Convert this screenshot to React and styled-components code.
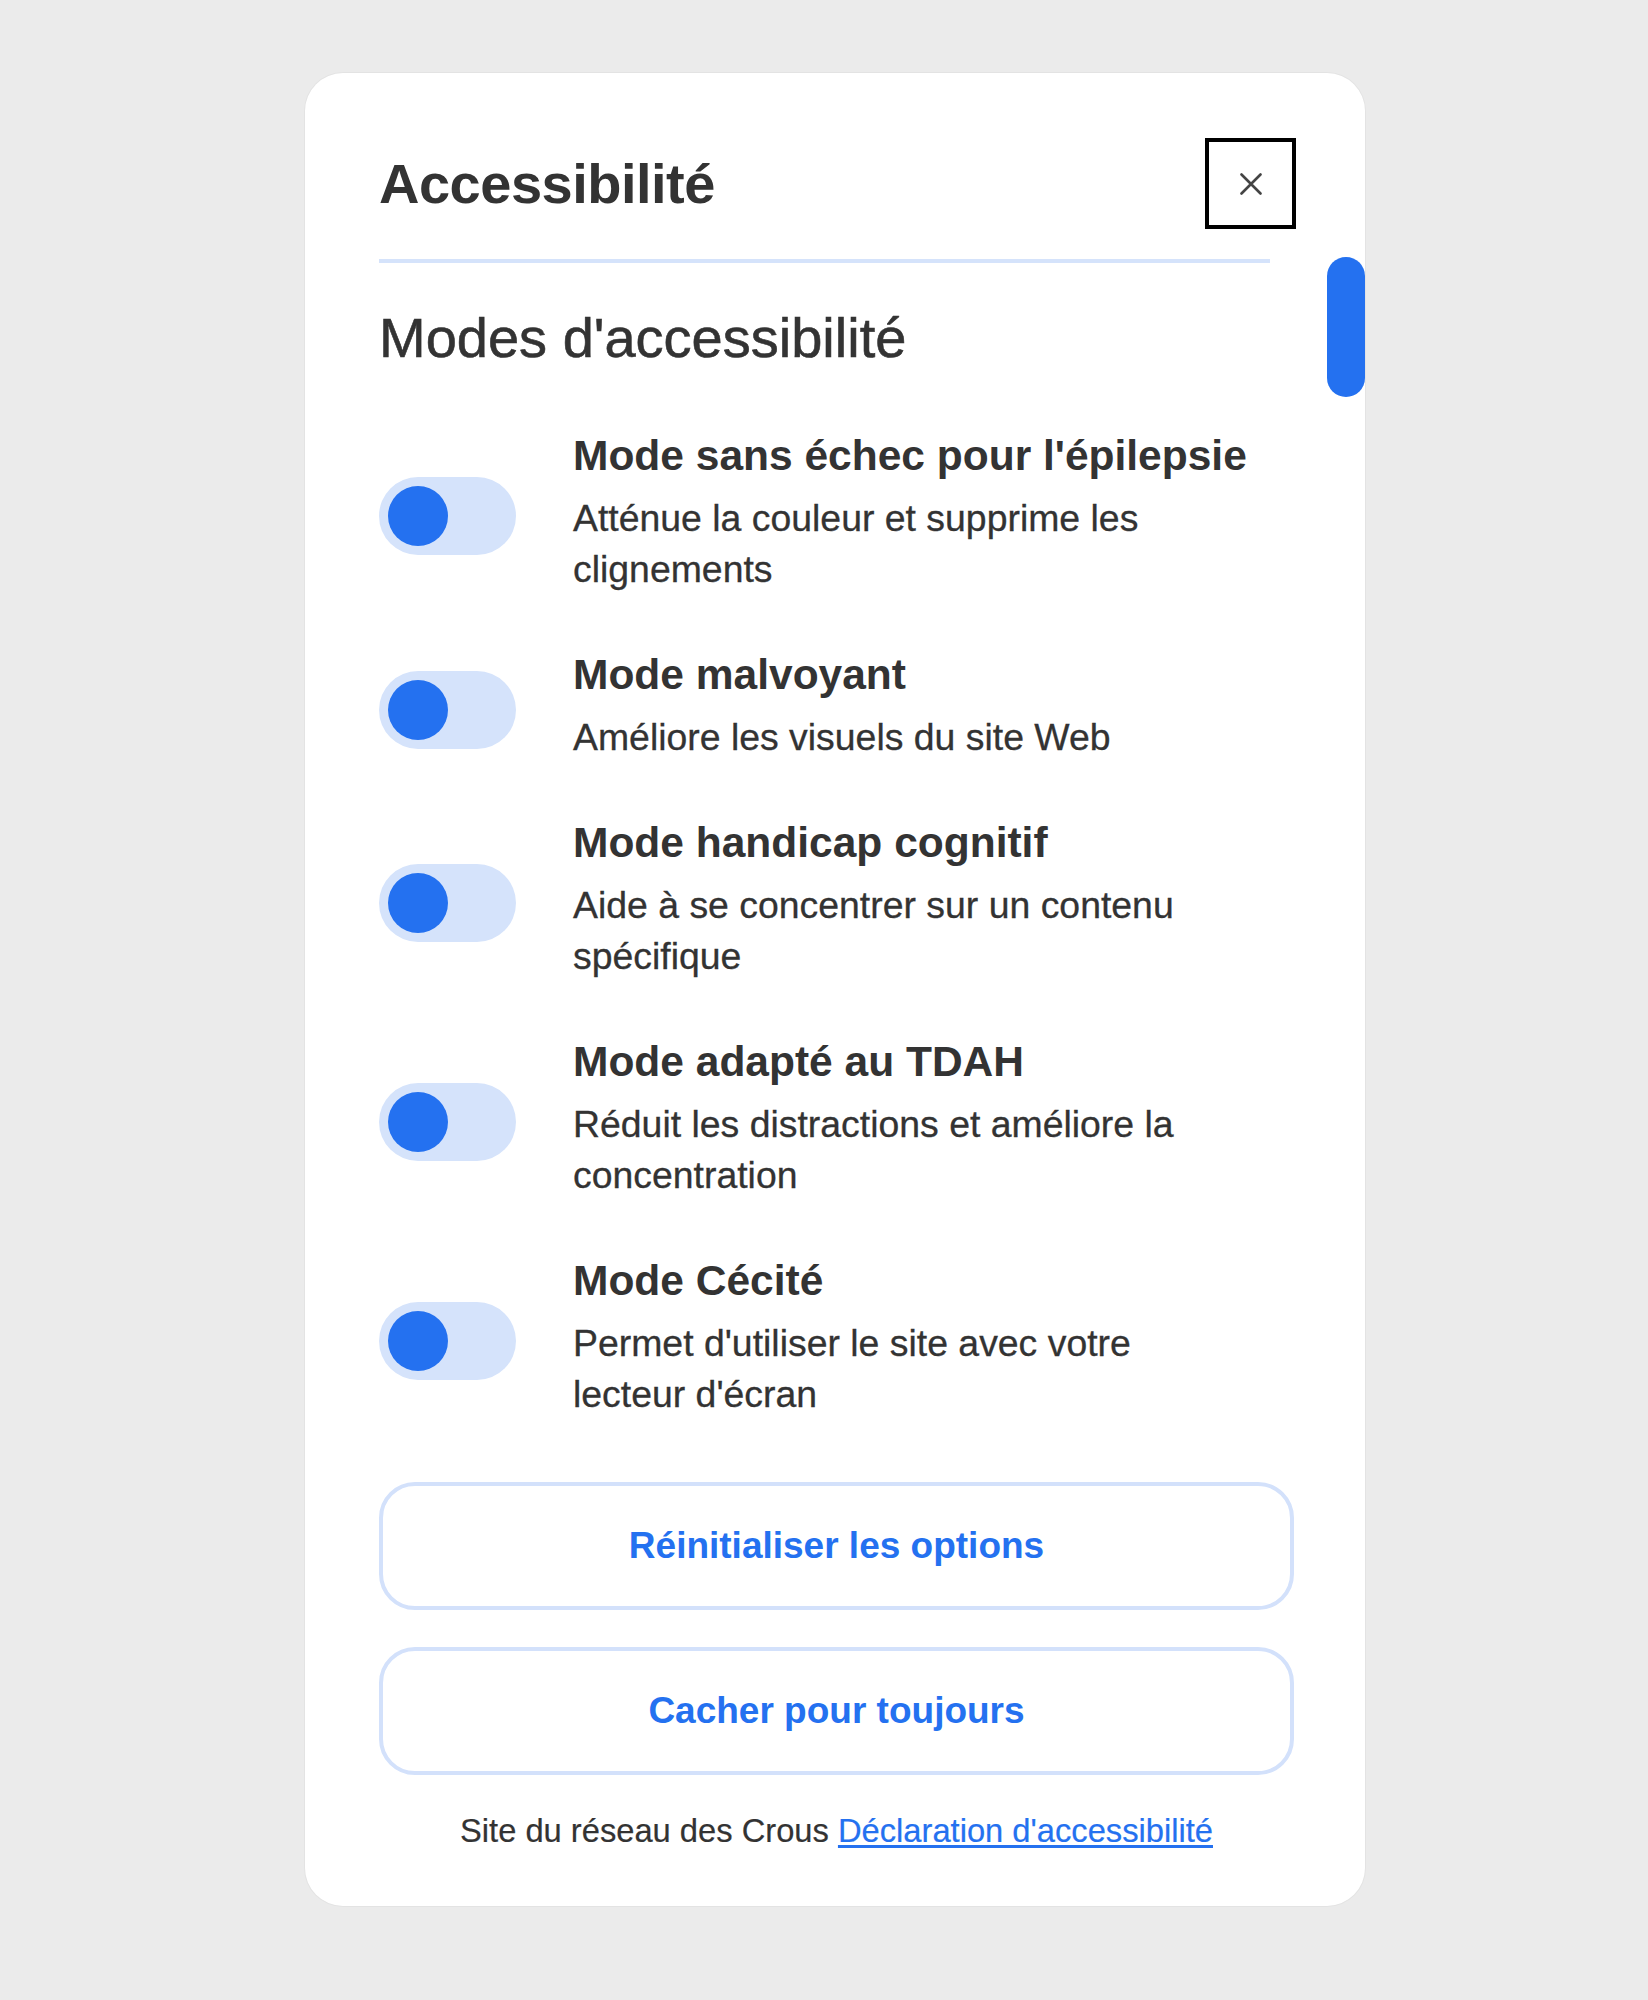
import React, { useState } from 'react'
import styled, { createGlobalStyle } from 'styled-components'

const GlobalStyle = createGlobalStyle`
  html, body {
    margin: 0;
    padding: 0;
    background: #ebebeb;
  }
  body {
    font-family: "Liberation Sans", Arial, sans-serif;
    color: #333;
  }
`

const Page = styled.div`
  min-height: 2000px;
  padding: 73px 0 0 305px;
  box-sizing: border-box;
`

const Card = styled.section`
  position: relative;
  width: 1060px;
  box-sizing: border-box;
  padding: 65px 71px 52px 74px;
  background: #fff;
  border-radius: 38px;
  box-shadow: 0 0 0 1px rgba(0, 0, 0, 0.03);
`

const ScrollThumb = styled.div`
  position: absolute;
  top: 184px;
  right: 0;
  width: 38px;
  height: 140px;
  border-radius: 19px;
  background: #2471f0;
`

const Header = styled.header`
  display: flex;
  align-items: center;
  justify-content: space-between;
`

const Title = styled.h1`
  margin: 0;
  font-size: 56px;
  line-height: 1.2;
  font-weight: 700;
  letter-spacing: -0.5px;
  color: #333;
`

const CloseButton = styled.button`
  width: 91px;
  height: 91px;
  margin-right: -2px;
  display: flex;
  align-items: center;
  justify-content: center;
  padding: 0;
  background: #fff;
  border: 4px solid #000;
  border-radius: 0;
  cursor: pointer;
`

const Divider = styled.hr`
  width: 891px;
  height: 4px;
  margin: 30px 0 0;
  border: none;
  background: #d5e3fb;
`

const SectionTitle = styled.h2`
  margin: 42px 0 0;
  font-size: 56px;
  line-height: 66px;
  font-weight: 400;
  -webkit-text-stroke: 0.6px #333;
  color: #333;
`

const ModeList = styled.ul`
  list-style: none;
  margin: 60px 0 0;
  padding: 0;
  display: flex;
  flex-direction: column;
  gap: 55px;
`

const ModeRow = styled.li`
  display: flex;
  align-items: center;
  gap: 57px;
`

const Toggle = styled.button`
  flex: 0 0 137px;
  height: 78px;
  margin-top: 6px;
  padding: 9px;
  border: none;
  border-radius: 39px;
  background: #d5e3fb;
  display: flex;
  justify-content: ${p => (p.$on ? 'flex-end' : 'flex-start')};
  cursor: pointer;
`

const Knob = styled.span`
  width: 60px;
  height: 60px;
  border-radius: 50%;
  background: #2471f0;
`

const ModeText = styled.div`
  width: 670px;
`

const ModeName = styled.h3`
  margin: 0;
  font-size: 42.5px;
  line-height: 50px;
  font-weight: 700;
  white-space: nowrap;
  color: #333;
`

const ModeDesc = styled.p`
  margin: 12px 0 0;
  font-size: 37.4px;
  line-height: 51px;
  -webkit-text-stroke: 0.3px #333;
  color: #333;
`

const Actions = styled.div`
  margin-top: 62px;
  display: flex;
  flex-direction: column;
  gap: 37px;
`

const ActionButton = styled.button`
  height: 128px;
  width: 100%;
  background: #fff;
  border: 4px solid #d3e1fb;
  border-radius: 36px;
  font-family: "Liberation Sans", Arial, sans-serif;
  font-size: 37px;
  font-weight: 700;
  color: #2471f0;
  cursor: pointer;
`

const Footer = styled.p`
  margin: 33px 0 0;
  text-align: center;
  font-size: 32.7px;
  line-height: 46px;
  -webkit-text-stroke: 0.2px #333;
  color: #333;
`

const FooterLink = styled.a`
  color: #2471f0;
  -webkit-text-stroke: 0.2px #2471f0;
  text-decoration: underline;
  text-underline-offset: 3px;
`

const modes = [
  {
    id: 'epilepsy',
    name: "Mode sans échec pour l'épilepsie",
    desc: 'Atténue la couleur et supprime les clignements'
  },
  {
    id: 'vision',
    name: 'Mode malvoyant',
    desc: 'Améliore les visuels du site Web'
  },
  {
    id: 'cognitive',
    name: 'Mode handicap cognitif',
    desc: 'Aide à se concentrer sur un contenu spécifique'
  },
  {
    id: 'adhd',
    name: 'Mode adapté au TDAH',
    desc: 'Réduit les distractions et améliore la concentration'
  },
  {
    id: 'blind',
    name: 'Mode Cécité',
    desc: "Permet d'utiliser le site avec votre lecteur d'écran"
  }
]

function CloseIcon() {
  return (
    <svg width="22" height="22" viewBox="0 0 22 22" aria-hidden="true">
      <path d="M1.5 1.5 L20.5 20.5 M20.5 1.5 L1.5 20.5" stroke="#444" strokeWidth="2.6" strokeLinecap="round" />
    </svg>
  )
}

export default function App() {
  const [active, setActive] = useState({})

  const toggleMode = (id) => {
    setActive(prev => ({ ...prev, [id]: !prev[id] }))
  }

  return (
    <Page>
      <GlobalStyle />
      <Card>
        <ScrollThumb />
        <Header>
          <Title>Accessibilité</Title>
          <CloseButton aria-label="Fermer">
            <CloseIcon />
          </CloseButton>
        </Header>
        <Divider />

        <SectionTitle>Modes d'accessibilité</SectionTitle>

        <ModeList>
          {modes.map(mode => (
            <ModeRow key={mode.id}>
              <Toggle
                role="switch"
                aria-checked={!!active[mode.id]}
                $on={!!active[mode.id]}
                onClick={() => toggleMode(mode.id)}
              >
                <Knob />
              </Toggle>
              <ModeText>
                <ModeName>{mode.name}</ModeName>
                <ModeDesc>{mode.desc}</ModeDesc>
              </ModeText>
            </ModeRow>
          ))}
        </ModeList>

        <Actions>
          <ActionButton onClick={() => setActive({})}>Réinitialiser les options</ActionButton>
          <ActionButton>Cacher pour toujours</ActionButton>
        </Actions>

        <Footer>
          Site du réseau des Crous <FooterLink href="#">Déclaration d'accessibilité</FooterLink>
        </Footer>
      </Card>
    </Page>
  )
}
